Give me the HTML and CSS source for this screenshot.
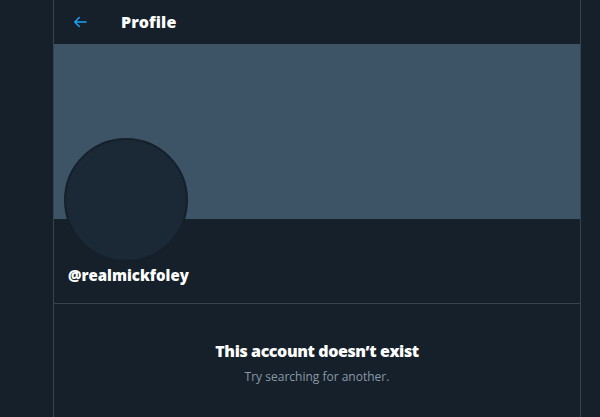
FILE: index.html
```html
<!DOCTYPE html>
<html>
<head>
<meta charset="utf-8">
<link rel="stylesheet" href="styles.css">
</head>
<body>
<main class="column">
  <header class="topbar">
    <span class="back">
      <svg viewBox="0 0 24 24" width="18" height="18"><path fill="#1da1f2" d="M20 11H7.414l4.293-4.293a1 1 0 0 0-1.414-1.414l-6 6a1 1 0 0 0 0 1.414l6 6a.997.997 0 0 0 1.414 0 1 1 0 0 0 0-1.414L7.414 13H20a1 1 0 1 0 0-2z"/></svg>
    </span>
    <h1 class="title">Profile</h1>
  </header>
  <section class="hero">
    <div class="banner"></div>
    <div class="avatar"></div>
    <div class="info">
      <div class="handle">@realmickfoley</div>
    </div>
  </section>
  <section class="empty">
    <div class="empty-title">This account doesn’t exist</div>
    <div class="empty-sub">Try searching for another.</div>
  </section>
</main>
</body>
</html>
```
FILE: styles.css
```css
html, body {
  margin: 0;
  padding: 0;
  background: #15202b;
  height: 100%;
  overflow: hidden;
}
body {
  font-family: "Open Sans", "DejaVu Sans", sans-serif;
  color: #ffffff;
}
.column {
  margin-left: 53px;
  width: 526px;
  min-height: 417px;
  border-left: 1px solid #38444d;
  border-right: 1px solid #38444d;
}
.topbar {
  height: 44px;
  display: flex;
  align-items: center;
  padding-left: 17px;
}
.back {
  display: flex;
  width: 18px;
  height: 18px;
  margin-right: 32px;
}
.title {
  margin: 0;
  font-size: 16px;
  font-weight: 800;
  letter-spacing: 0.1px;
}
.hero {
  position: relative;
  border-bottom: 1px solid #38444d;
}
.banner {
  height: 175px;
  background: #3d5466;
}
.avatar {
  position: absolute;
  left: 10px;
  top: 94px;
  width: 120px;
  height: 120px;
  border-radius: 50%;
  background: #1b2836;
  border: 2px solid #15202b;
}
.info {
  padding: 46px 14px 0;
  height: 38px;
}
.handle {
  font-size: 15px;
  font-weight: 800;
  line-height: 20px;
}
.empty {
  padding-top: 36px;
  text-align: center;
}
.empty-title {
  font-size: 16px;
  font-weight: 800;
  line-height: 22px;
  letter-spacing: -0.4px;
}
.empty-sub {
  margin-top: 6px;
  font-size: 12px;
  color: #8899a6;
  line-height: 18px;
}
```
